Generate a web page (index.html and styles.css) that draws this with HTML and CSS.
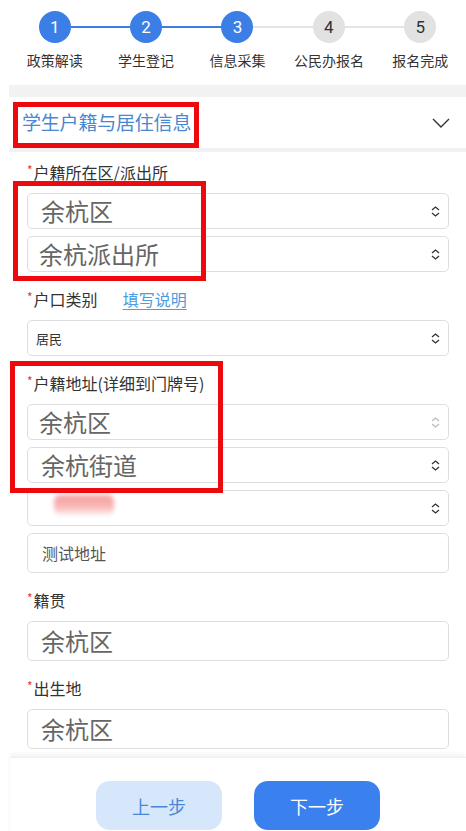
FILE: index.html
```html
<!DOCTYPE html>
<html lang="zh-CN">
<head>
<meta charset="utf-8">
<title>信息采集</title>
<link rel="stylesheet" href="styles.css">
</head>
<body>
<div class="page">
  <div class="steps">
    <div class="step active"><div class="dot">1</div><div class="step-label">政策解读</div></div>
    <div class="step active"><div class="dot">2</div><div class="step-label">学生登记</div></div>
    <div class="step active"><div class="dot">3</div><div class="step-label">信息采集</div></div>
    <div class="step"><div class="dot">4</div><div class="step-label">公民办报名</div></div>
    <div class="step"><div class="dot">5</div><div class="step-label">报名完成</div></div>
  </div>
  <div class="band"></div>
  <div class="section-head">
    <span class="section-title">学生户籍与居住信息</span>
    <svg class="chev" width="18" height="10" viewBox="0 0 18 10"><polyline points="1,1 9,9 17,1" fill="none" stroke="#333" stroke-width="1.4"/></svg>
  </div>
  <div class="divider"></div>

  <div class="form">
    <div class="group">
      <div class="label"><span class="req">*</span>户籍所在区/派出所</div>
      <div class="controls">
        <div class="select"><span class="big">余杭区</span><svg class="ud" width="9" height="11" viewBox="0 0 9 11"><polyline points="1,4 4.5,1 8,4" fill="none" stroke="#333" stroke-width="1.3"/><polyline points="1,7 4.5,10 8,7" fill="none" stroke="#333" stroke-width="1.3"/></svg></div>
        <div class="select"><span class="big tight">余杭派出所</span><svg class="ud" width="9" height="11" viewBox="0 0 9 11"><polyline points="1,4 4.5,1 8,4" fill="none" stroke="#333" stroke-width="1.3"/><polyline points="1,7 4.5,10 8,7" fill="none" stroke="#333" stroke-width="1.3"/></svg></div>
      </div>
    </div>

    <div class="group">
      <div class="label"><span class="req">*</span>户口类别<a class="help" href="#">填写说明</a></div>
      <div class="controls">
        <div class="select"><span class="small">居民</span><svg class="ud" width="9" height="11" viewBox="0 0 9 11"><polyline points="1,4 4.5,1 8,4" fill="none" stroke="#333" stroke-width="1.3"/><polyline points="1,7 4.5,10 8,7" fill="none" stroke="#333" stroke-width="1.3"/></svg></div>
      </div>
    </div>

    <div class="group">
      <div class="label"><span class="req">*</span>户籍地址(详细到门牌号)</div>
      <div class="controls">
        <div class="select"><span class="big tight">余杭区</span><svg class="ud" width="9" height="11" viewBox="0 0 9 11"><polyline points="1,4 4.5,1 8,4" fill="none" stroke="#bbb" stroke-width="1.3"/><polyline points="1,7 4.5,10 8,7" fill="none" stroke="#bbb" stroke-width="1.3"/></svg></div>
        <div class="select"><span class="big">余杭街道</span><svg class="ud" width="9" height="11" viewBox="0 0 9 11"><polyline points="1,4 4.5,1 8,4" fill="none" stroke="#333" stroke-width="1.3"/><polyline points="1,7 4.5,10 8,7" fill="none" stroke="#333" stroke-width="1.3"/></svg></div>
        <div class="select"><span class="smear"></span><svg class="ud" width="9" height="11" viewBox="0 0 9 11"><polyline points="1,4 4.5,1 8,4" fill="none" stroke="#333" stroke-width="1.3"/><polyline points="1,7 4.5,10 8,7" fill="none" stroke="#333" stroke-width="1.3"/></svg></div>
        <div class="input"><span class="plain">测试地址</span></div>
      </div>
    </div>

    <div class="group">
      <div class="label"><span class="req">*</span>籍贯</div>
      <div class="controls">
        <div class="input"><span class="big">余杭区</span></div>
      </div>
    </div>

    <div class="group">
      <div class="label"><span class="req">*</span>出生地</div>
      <div class="controls">
        <div class="input"><span class="big">余杭区</span></div>
      </div>
    </div>
  </div>

  <div class="footer">
    <button class="btn btn-prev" type="button">上一步</button>
    <button class="btn btn-next" type="button">下一步</button>
  </div>

  <div class="mark mark-title"></div>
  <div class="mark mark-district"></div>
  <div class="mark mark-address"></div>
</div>
</body>
</html>
```
FILE: styles.css
```css
* { box-sizing: border-box; }
html, body {
  margin: 0;
  padding: 0;
  background: #fff;
  font-family: "Noto Sans CJK SC", "Noto Sans", sans-serif;
  color: #333;
}
.page {
  position: relative;
  width: 466px;
  padding-left: 9px;
  overflow: hidden;
}

/* steps */
.steps {
  display: grid;
  grid-template-columns: repeat(5, 1fr);
  padding: 11px 0 15px;
  height: 85px;
}
.step {
  position: relative;
  display: flex;
  flex-direction: column;
  align-items: center;
}
.step + .step::before {
  content: "";
  position: absolute;
  top: 15px;
  left: -50%;
  width: 100%;
  height: 2px;
  background: #e4e4e4;
}
.step.active + .step.active::before { background: #3a7ee6; }
.dot {
  position: relative;
  z-index: 1;
  width: 32px;
  height: 32px;
  border-radius: 50%;
  background: #e2e2e2;
  color: #333;
  font-family: Roboto, "Liberation Sans", sans-serif;
  font-size: 17px;
  display: flex;
  align-items: center;
  justify-content: center;
}
.step.active .dot { background: #3a7ee6; color: #fff; }
.step-label {
  margin-top: 7px;
  font-size: 14px;
  line-height: 20px;
  color: #333;
  white-space: nowrap;
}

.band { height: 12px; background: #f2f2f2; }
.section-head {
  height: 51px;
  display: flex;
  align-items: center;
  justify-content: space-between;
  padding: 0 16px 2px 13px;
}
.section-title {
  font-size: 19px;
  color: #4a87d2;
  letter-spacing: -0.2px;
}
.chev { margin-top: 2px; }
.divider { height: 4px; background: #f1f1f1; }

/* form */
.form { padding: 10px 17px 0 18px; }
.group + .group { margin-top: 17px; }
.label {
  font-size: 16px;
  line-height: 20px;
  height: 20px;
  margin-bottom: 11px;
  color: #333;
  display: flex;
  align-items: center;
}
.req {
  color: #e0382a;
  font-size: 12px;
  margin-right: 1px;
  align-self: flex-start;
  line-height: 16px;
}
.help {
  margin-left: 25px;
  color: #4d9be0;
  text-decoration: underline;
  text-underline-offset: 3px;
}
.controls { display: flex; flex-direction: column; gap: 7px; }
.select, .input {
  border: 1px solid #dedede;
  border-radius: 5px;
  display: flex;
  align-items: center;
  justify-content: space-between;
  padding: 0 8px 0 8px;
  background: #fff;
}
.select { height: 36px; }
.input { height: 40px; }
.big {
  font-size: 24px;
  color: #666;
  margin-left: 5px;
  line-height: 30px;
}
.big.tight { margin-left: 3px; }
.small { font-size: 13px; color: #333; }
.plain { font-size: 16px; color: #555; margin-left: 6px; }
.smear {
  width: 60px;
  height: 20px;
  margin-left: 18px;
  margin-top: -6px;
  background: linear-gradient(#f7a0a0 0%, #f9b8b8 60%, rgba(250,220,220,0.4) 100%);
  border-radius: 6px;
  filter: blur(2px);
}
.ud { flex: none; }

/* footer */
.footer {
  margin-top: 8px;
  margin-left: 1px;
  padding-top: 23px;
  height: 90px;
  display: flex;
  justify-content: center;
  gap: 32px;
  box-shadow: 0 -3px 4px rgba(0,0,0,0.05);
  border-top: 1px solid #f0f0f0;
}
.btn {
  width: 126px;
  height: 49px;
  border: none;
  border-radius: 14px;
  font-family: "Noto Sans CJK SC", sans-serif;
  font-size: 18px;
}
.btn-prev { background: #d6e6fb; color: #4a86d6; }
.btn-next { background: #3a80ee; color: #fff; }

/* red annotation boxes */
.mark {
  position: absolute;
  border: 5px solid #ec0a0e;
  pointer-events: none;
}
.mark-title { left: 13px; top: 102px; width: 186px; height: 46px; }
.mark-district { left: 13px; top: 181px; width: 193px; height: 100px; }
.mark-address { left: 10px; top: 361px; width: 213px; height: 132px; }
```
